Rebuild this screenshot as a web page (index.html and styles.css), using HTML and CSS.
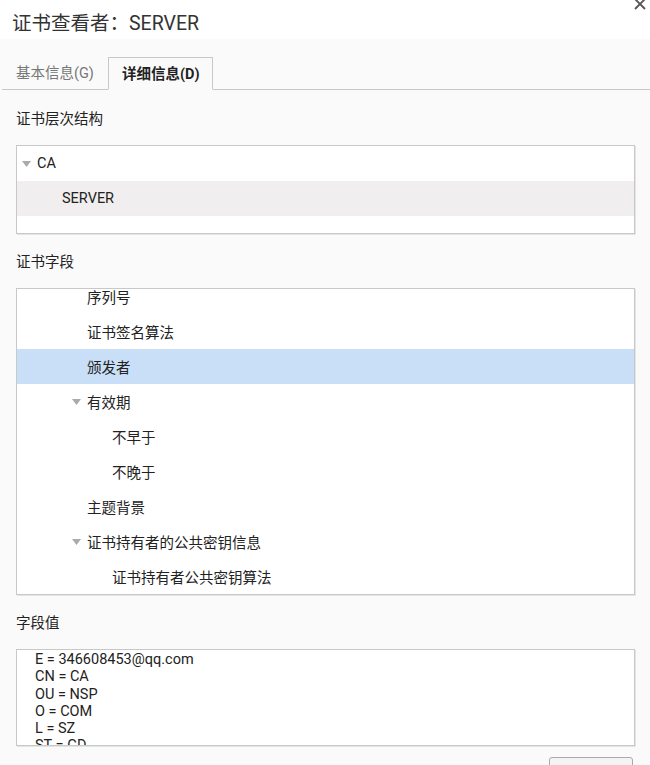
FILE: index.html
```html
<!DOCTYPE html>
<html lang="zh-CN">
<head>
    <meta charset="UTF-8">
    <meta name="viewport" content="width=device-width, initial-scale=1.0">
    <title>证书查看者：SERVER</title>
    <link rel="stylesheet" href="styles.css">
</head>
<body>
    <div class="title-bar">
        <h1>证书查看者：SERVER</h1>
        <svg class="close-btn" width="14" height="14" viewBox="0 0 14 14">
            <path d="M2 2L12 12M12 2L2 12" stroke="#555" stroke-width="1.8" fill="none"/>
        </svg>
    </div>

    <div class="tabs">
        <div class="tab">基本信息(G)</div>
        <div class="tab active">详细信息(D)</div>
        <div class="tab-fill"></div>
    </div>

    <div class="content">
        <div class="section first">
            <div class="section-label">证书层次结构</div>
            <div class="box hierarchy">
                <div class="row level-0 has-twisty"><span class="twisty"><svg width="9" height="6" viewBox="0 0 9 6"><path d="M0 0H9L4.5 6Z" fill="#aaa"/></svg></span>CA</div>
                <div class="row level-1 selected-gray">SERVER</div>
            </div>
        </div>

        <div class="section">
            <div class="section-label">证书字段</div>
            <div class="box fields">
                <div class="fields-list" id="fields"></div>
            </div>
        </div>

        <div class="section">
            <div class="section-label">字段值</div>
            <div class="box values">
                <div class="value-line">E = 346608453@qq.com</div>
                <div class="value-line">CN = CA</div>
                <div class="value-line">OU = NSP</div>
                <div class="value-line">O = COM</div>
                <div class="value-line">L = SZ</div>
                <div class="value-line">ST = GD</div>
            </div>
        </div>

        <div class="button-row">
            <button class="export-btn">导出(X)…</button>
        </div>
    </div>

    <script>
        const fields = [
            { name: '序列号', level: 2 },
            { name: '证书签名算法', level: 2 },
            { name: '颁发者', level: 2, selected: true },
            { name: '有效期', level: 2, open: true },
            { name: '不早于', level: 3 },
            { name: '不晚于', level: 3 },
            { name: '主题背景', level: 2 },
            { name: '证书持有者的公共密钥信息', level: 2, open: true },
            { name: '证书持有者公共密钥算法', level: 3 },
            { name: '证书持有者的公共密钥', level: 3 }
        ];

        const list = document.getElementById('fields');
        fields.forEach(field => {
            const row = document.createElement('div');
            row.className = 'row level-' + field.level + (field.selected ? ' selected' : '');
            if (field.open) {
                row.classList.add('has-twisty');
                row.innerHTML = '<span class="twisty"><svg width="9" height="6" viewBox="0 0 9 6"><path d="M0 0H9L4.5 6Z" fill="#aaa"/></svg></span>' + field.name;
            } else {
                row.textContent = field.name;
            }
            list.appendChild(row);
        });
    </script>
</body>
</html>
```

FILE: styles.css
```css
body {
    margin: 0;
    padding: 0;
    font-family: 'Roboto', 'Noto Sans CJK SC', sans-serif;
    background-color: #fafafa;
    color: #222;
    overflow: hidden;
}

.title-bar {
    background-color: #fff;
    height: 39px;
    display: flex;
    justify-content: space-between;
    align-items: flex-start;
    padding: 0 3px 0 12px;
    box-sizing: border-box;
}

.title-bar h1 {
    margin: 0;
    padding-top: 12px;
    font-size: 19.5px;
    line-height: 24px;
    font-weight: normal;
    color: #333;
}

.close-btn {
    margin-top: -3px;
}

.tabs {
    display: flex;
    align-items: flex-end;
    height: 51px;
    padding-left: 2px;
    box-sizing: border-box;
}

.tab {
    height: 33px;
    line-height: 33px;
    padding: 0 14px;
    font-size: 14.5px;
    color: #777;
    border-bottom: 1px solid #c8c8c8;
    box-sizing: border-box;
}

.tab.active {
    color: #222;
    font-weight: bold;
    border: 1px solid #c8c8c8;
    border-bottom-color: #fafafa;
    padding: 0 13px;
}

.tab-fill {
    flex: 1;
    border-bottom: 1px solid #c8c8c8;
}

.content {
    padding: 0 15px 0 16px;
}

.section {
    margin-top: 19px;
}

.section.first {
    margin-top: 20px;
}

.section-label {
    font-size: 14.5px;
    line-height: 20px;
    margin-bottom: 15px;
}

.box {
    background-color: #fff;
    border: 1px solid #c8c8c8;
    box-shadow: 1px 1px 0 #e4e4e4;
    overflow: hidden;
}

.hierarchy {
    height: 87px;
}

.fields {
    height: 305px;
}

.fields-list {
    margin-top: -10px;
}

.row {
    height: 35px;
    display: flex;
    align-items: center;
    font-size: 14.5px;
    white-space: nowrap;
}

/* text moves 25px further in per level, the twisty sits 15px before it */
.level-0 { padding-left: 20px; }
.level-1 { padding-left: 45px; }
.level-2 { padding-left: 70px; }
.level-3 { padding-left: 95px; }

.row.has-twisty.level-0 { padding-left: 5px; }
.row.has-twisty.level-2 { padding-left: 55px; }

.twisty {
    width: 15px;
    display: flex;
    align-items: center;
}

.selected-gray {
    background-color: #f0eeee;
}

.selected {
    background-color: #c9dff7;
}

.values {
    height: 94px;
    padding: 1px 0 0 18px;
}

.value-line {
    font-size: 14.5px;
    line-height: 17.3px;
}

.button-row {
    display: flex;
    justify-content: flex-end;
    padding-right: 2px;
    margin-top: 11px;
}

.export-btn {
    width: 84px;
    height: 30px;
    border: 1px solid #aaa;
    border-radius: 3px;
    background-color: #f4f4f4;
    font-family: inherit;
    font-size: 14px;
    color: #222;
}
```
